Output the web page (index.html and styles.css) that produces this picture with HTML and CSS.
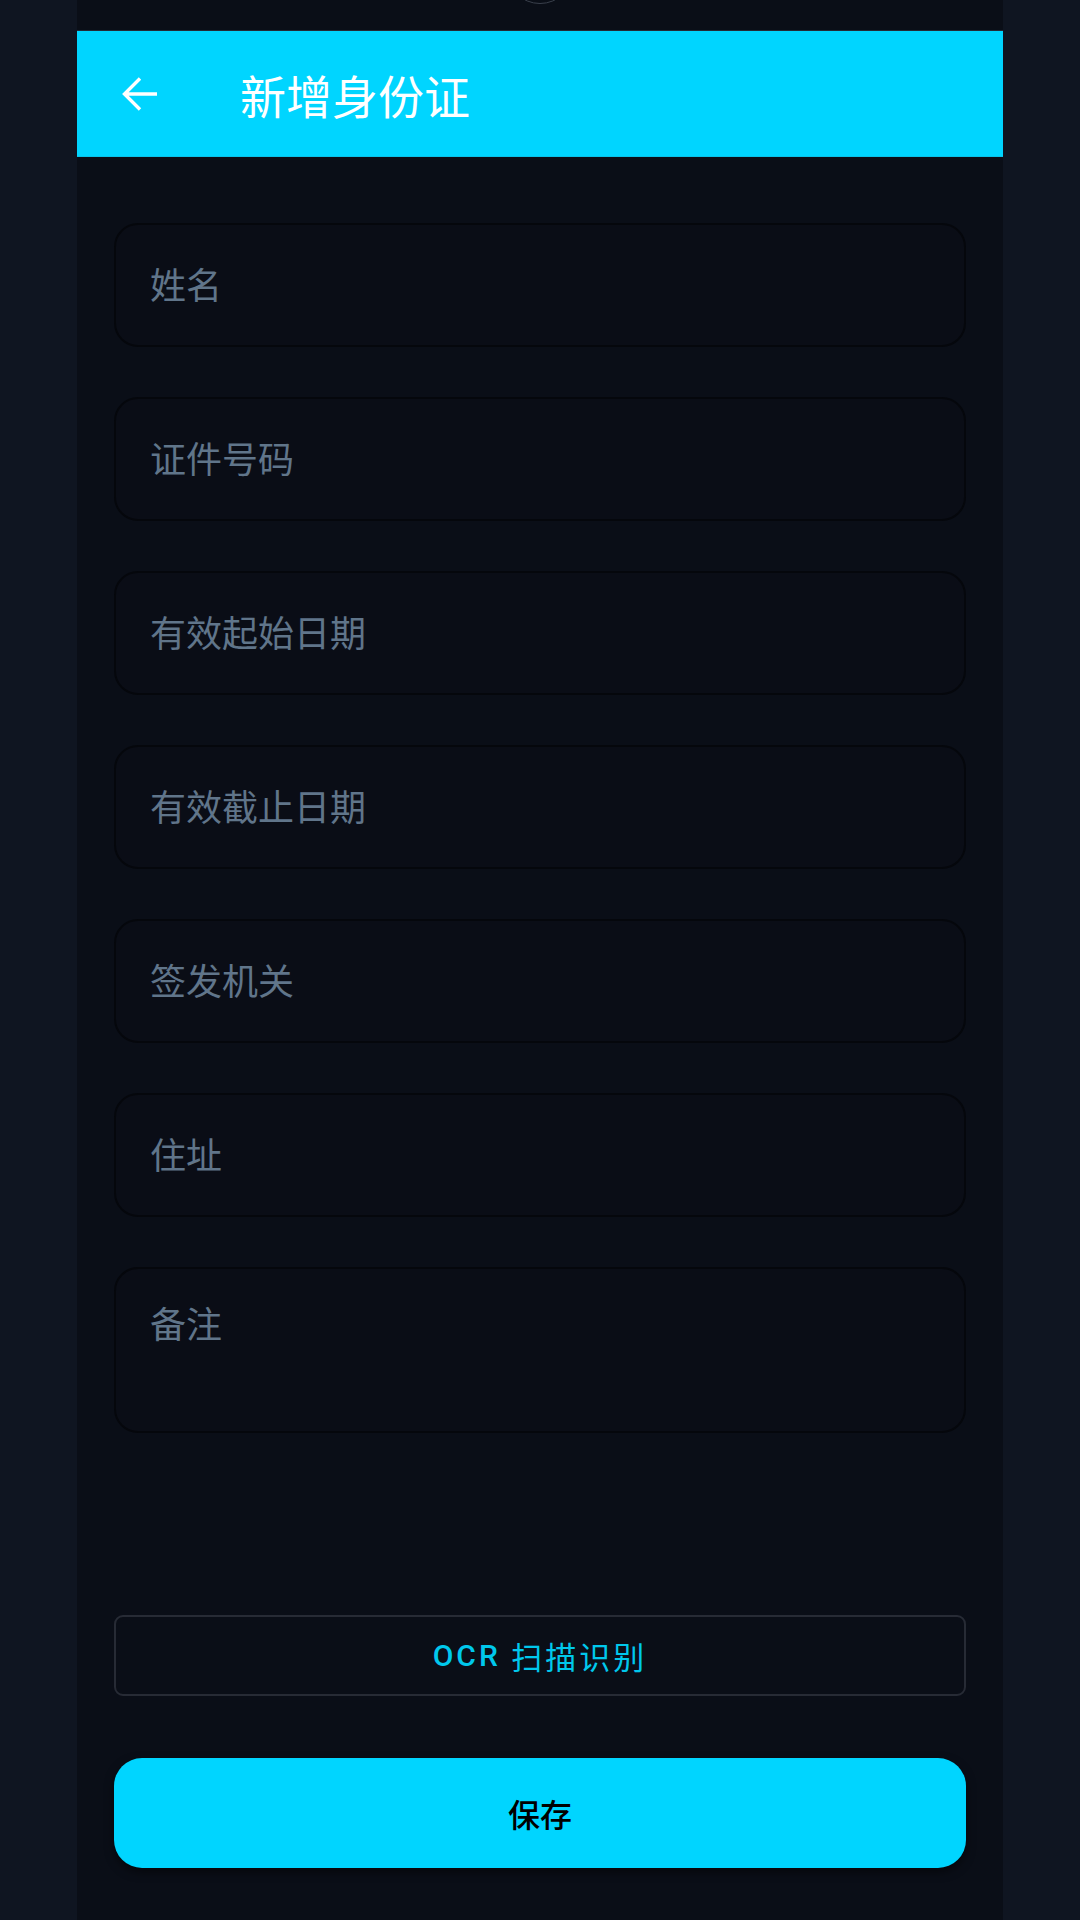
FILE: index.html
```html
<!DOCTYPE html>
<html lang="zh-CN">
<head>
<meta charset="utf-8">
<title>新增身份证</title>
<link rel="stylesheet" href="styles.css">
</head>
<body>
<div class="phone">
  <div class="statusbar"><span class="camera"></span></div>
  <header class="appbar">
    <svg class="back" width="38" height="38" viewBox="0 0 38 38" aria-hidden="true">
      <path d="M36 19H4 M19 3.5 L3.5 19 L19 34.5" fill="none" stroke="#ffffff" stroke-width="3.4" stroke-linejoin="miter"/>
    </svg>
    <h1 class="title">新增身份证</h1>
  </header>
  <main class="form">
    <div class="field">姓名</div>
    <div class="field">证件号码</div>
    <div class="field">有效起始日期</div>
    <div class="field">有效截止日期</div>
    <div class="field">签发机关</div>
    <div class="field">住址</div>
    <div class="field field-multi">备注</div>
  </main>
  <div class="actions">
    <div class="btn-ocr"><span class="ocr-latin">OCR</span>&nbsp;<span class="ocr-cjk">扫描识别</span></div>
    <div class="btn-save">保存</div>
  </div>
</div>
</body>
</html>
```
FILE: styles.css
```css
* { box-sizing: border-box; }
html, body { margin: 0; padding: 0; }
body {
  background: #0f1521;
  font-family: Roboto, "Noto Sans CJK SC", sans-serif;
}
.phone {
  width: 926px;
  margin: 0 auto;
  min-height: 1920px;
  background: #0a0e17;
  display: flex;
  flex-direction: column;
  position: relative;
  overflow: hidden;
}
.statusbar {
  height: 30px;
  position: relative;
}
.camera {
  position: absolute;
  left: 429px;
  top: -64px;
  width: 68px;
  height: 68px;
  border-radius: 50%;
  border: 1.5px solid #3a404c;
}
.appbar {
  height: 127px;
  background: #00d5ff;
  border-top: 1px solid #242a35;
  border-bottom: 1px solid #08c3ea;
  display: flex;
  align-items: center;
  padding-left: 44px;
}
.back { display: block; flex: none; }
.title {
  margin: 0 0 0 81px;
  font-family: "Noto Sans CJK SC", sans-serif;
  font-size: 46px;
  font-weight: 400;
  color: #ffffff;
  line-height: 1;
}
.form {
  padding: 66px 37px 0;
  display: flex;
  flex-direction: column;
  gap: 50px;
}
.field {
  height: 124px;
  border: 2px solid #05070c;
  border-radius: 24px;
  background: #0a0d16;
  padding: 0 34px 4px;
  display: flex;
  align-items: center;
  font-family: "Noto Sans CJK SC", sans-serif;
  font-size: 36px;
  color: #60758a;
}
.field-multi {
  height: 166px;
  align-items: flex-start;
  padding-top: 31px;
  line-height: 44px;
}
.actions {
  padding: 182px 37px 0;
  display: flex;
  flex-direction: column;
}
.btn-ocr {
  height: 81px;
  border: 2px solid #272b35;
  border-radius: 9px;
  display: flex;
  align-items: center;
  justify-content: center;
  font-size: 30px;
  letter-spacing: 3px;
  color: #00c8ec;
}
.ocr-latin { font-weight: 500; }
.ocr-cjk {
  font-family: "Noto Sans CJK SC", sans-serif;
  font-weight: 400;
  font-size: 31px;
  letter-spacing: 3px;
}
.btn-save {
  margin-top: 62px;
  height: 110px;
  border-radius: 28px;
  background: #00d5ff;
  box-shadow: 0 4px 10px rgba(0, 0, 0, 0.5);
  display: flex;
  align-items: center;
  justify-content: center;
  font-family: "Noto Sans CJK SC", sans-serif;
  font-size: 32px;
  font-weight: 500;
  color: #000000;
}
```
